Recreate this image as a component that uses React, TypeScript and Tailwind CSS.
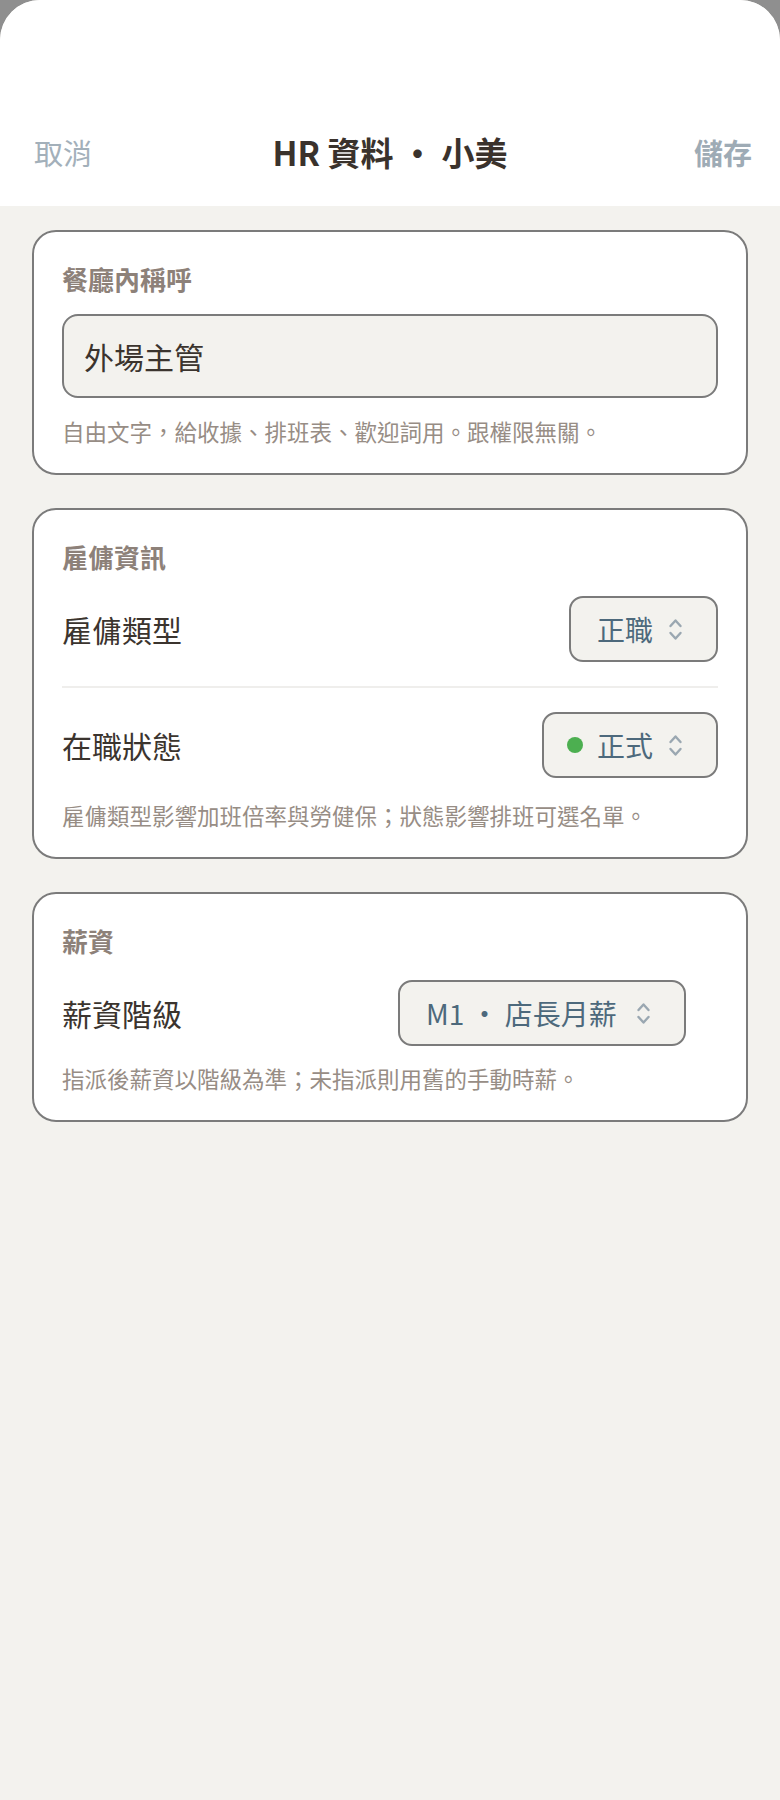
import React from "react";

const font = "font-['Noto_Sans_CJK_TC','Noto_Sans',sans-serif]";

// small up/down chevron pair shown at the end of each picker
const UpDown: React.FC = () => (
  <svg width="15" height="25" viewBox="0 0 15 25" fill="none" stroke="#9aa7b1" strokeWidth="2.4" strokeLinecap="round" strokeLinejoin="round" className="shrink-0">
    <path d="M2.5 9 L7.5 3.5 L12.5 9" />
    <path d="M2.5 16 L7.5 21.5 L12.5 16" />
  </svg>
);

const Picker: React.FC<{ dot?: boolean; className?: string; children: React.ReactNode }> = ({ dot, className = "", children }) => (
  <div className={`flex h-[66px] items-center rounded-[14px] border-2 border-[#7b7b7b] bg-[#f3f2ee] pr-[33px] ${dot ? "pl-[23px]" : "pl-[26px]"} ${className}`}>
    {dot && <span className="mr-[14px] h-[16px] w-[16px] rounded-full bg-[#4caf50]" />}
    <span className="whitespace-pre text-[28px] leading-none text-[#4d697c]">{children}</span>
    <span className="ml-auto flex pl-[15px]">
      <UpDown />
    </span>
  </div>
);

const Card: React.FC<{ title: string; children: React.ReactNode }> = ({ title, children }) => (
  <section className="rounded-[24px] border-2 border-[#7b7b7b] bg-white px-[28px] pt-[28px] pb-[26px]">
    <h2 className="text-[26px] font-bold leading-[38px] text-[#8d8179]">{title}</h2>
    {children}
  </section>
);

const Hint: React.FC<{ className?: string; children: React.ReactNode }> = ({ className = "", children }) => (
  <p className={`text-[22.5px] leading-[32px] text-[#978d85] ${className}`}>{children}</p>
);

export default function App() {
  return (
    <div className={`min-h-[1800px] bg-[#8f8f8f] ${font}`}>
      <div className="min-h-[1800px] overflow-hidden rounded-t-[40px] bg-[#f3f2ee]">
        {/* nav bar */}
        <header className="h-[206px] bg-white pt-[100px]">
          <div className="grid h-[106px] grid-cols-[1fr_auto_1fr] items-center px-[34px]">
            <button className="justify-self-start text-[29px] text-[#a3b0ba]">取消</button>
            <h1 className="text-[33px] font-bold text-[#3a322c]">HR 資料 ・ 小美</h1>
            <button className="-mr-[6px] justify-self-end text-[29px] font-bold text-[#9eabb5]">儲存</button>
          </div>
        </header>

        <main className="flex flex-col gap-[33px] px-[32px] pt-[24px]">
          <Card title="餐廳內稱呼">
            <div className="mt-[16px] flex h-[84px] items-center rounded-[16px] border-2 border-[#7b7b7b] bg-[#f3f2ee] px-[20px]">
              <span className="text-[30px] text-[#3b342e]">外場主管</span>
            </div>
            <Hint className="mt-[17px]">自由文字，給收據、排班表、歡迎詞用。跟權限無關。</Hint>
          </Card>

          <Card title="雇傭資訊">
            <div className="mt-[20px] flex items-center justify-between">
              <span className="text-[30px] text-[#3b342e]">雇傭類型</span>
              <Picker>正職</Picker>
            </div>
            <div className="mt-[24px] h-[2px] bg-[#efeeec]" />
            <div className="mt-[24px] flex items-center justify-between">
              <span className="text-[30px] text-[#3b342e]">在職狀態</span>
              <Picker dot>正式</Picker>
            </div>
            <Hint className="mt-[21px]">雇傭類型影響加班倍率與勞健保；狀態影響排班可選名單。</Hint>
          </Card>

          <Card title="薪資">
            <div className="mt-[20px] flex items-center justify-between">
              <span className="text-[30px] text-[#3b342e]">薪資階級</span>
              <Picker className="mr-[32px] w-[288px]">M1 ・ 店長月薪</Picker>
            </div>
            <Hint className="mt-[16px]">指派後薪資以階級為準；未指派則用舊的手動時薪。</Hint>
          </Card>
        </main>
      </div>
    </div>
  );
}
